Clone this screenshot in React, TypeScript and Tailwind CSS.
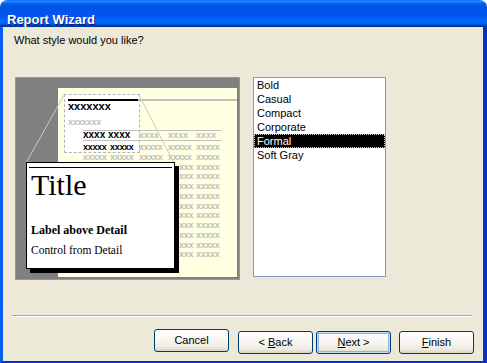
import React from 'react';

const styles = ['Bold', 'Casual', 'Compact', 'Corporate', 'Formal', 'Soft Gray'];
const selected = 'Formal';

// column lefts of the sample table, relative to its own left edge
const cols = [0, 27, 56, 85, 113];

const WizButton = ({ label, under, isDefault }: { label: string; under?: number; isDefault?: boolean }) => (
  <button
    className={`w-[75px] h-[23px] rounded-[3px] border border-[#003c74] bg-[linear-gradient(180deg,#ffffff_0%,#f5f4ef_55%,#ebe8de_85%,#d8d2c6_100%)] text-[11px] leading-[13px] text-black font-['Liberation_Sans',sans-serif] ${
      isDefault ? 'shadow-[inset_0_0_0_1px_#c6dcfb,inset_0_0_0_2px_#8fb2ea]' : ''
    }`}
  >
    {under === undefined ? (
      label
    ) : (
      <>
        {label.slice(0, under)}
        <span className="underline">{label[under]}</span>
        {label.slice(under + 1)}
      </>
    )}
  </button>
);

const Cell = ({ left, black, text = 'xxxxx' }: { left: number; black?: boolean; text?: string }) => (
  <div
    className={`absolute top-0 text-[9px] leading-[9px] tracking-[-0.3px] ${black ? 'text-black' : 'text-[#c0c0c0]'}`}
    style={{ left }}
  >
    {text}
  </div>
);

const Preview = () => (
  <div className="relative w-[225px] h-[203px] border border-[#7f9db9] bg-[#808080] overflow-hidden">
    {/* report page */}
    <div className="absolute left-[42px] top-[10px] w-[179px] h-[189px] bg-[#ffffe1]" />
    {/* zoomed area */}
    <div className="absolute left-[48px] top-[16px] w-[76px] h-[59px] bg-white border border-dashed border-[#b4b4b4]" />
    <div className="absolute left-[52px] top-[21px] w-[70px] h-[2px] bg-black" />
    <div className="absolute left-[122px] top-[21px] w-[99px] h-[2px] bg-[#c0c0c0]" />

    <div className="absolute left-[52px] top-[23px] text-[11px] leading-[11px] font-bold text-black font-['Liberation_Sans',sans-serif]">
      xxxxxxx
    </div>
    <div className="absolute left-[52px] top-[40px] text-[9px] leading-[9px] font-bold text-[#c0c0c0] font-['Liberation_Sans',sans-serif] tracking-[-0.3px]">
      xxxxxxx
    </div>

    {/* header row */}
    <div className="absolute left-[67px] top-[52px] w-[138px] h-[11px] border-y border-[#c0c0c0] font-['Liberation_Sans',sans-serif] font-bold">
      <div className="absolute left-0 top-[-1px] text-[10px] leading-[10px] text-black">xxxx xxxx</div>
      {cols.slice(2).map((c) => (
        <div key={c} className="absolute top-0 text-[9px] leading-[9px] text-[#c0c0c0]" style={{ left: c }}>
          xxxx
        </div>
      ))}
    </div>

    {/* data rows; the ones under the popup only show what sticks out */}
    <div className="absolute left-[67px] top-[65px] w-[138px] flex flex-col font-['Liberation_Sans',sans-serif] font-bold">
      {Array.from({ length: 12 }).map((_, r) => (
        <div key={r} className="relative h-[9.75px]">
          {r < 2 ? (
            cols.map((c, i) => <Cell key={c} left={c} black={r === 0 && i < 2} />)
          ) : (
            <>
              <Cell left={96} text="xxx" />
              <Cell left={cols[4]} />
            </>
          )}
        </div>
      ))}
    </div>

    {/* callout lines */}
    <svg className="absolute left-0 top-0" width="223" height="201">
      <line x1="48" y1="17" x2="10" y2="85" stroke="#c8c8c8" strokeWidth="1" />
      <line x1="123" y1="17" x2="158" y2="85" stroke="#c8c8c8" strokeWidth="1" />
    </svg>

    {/* zoomed popup */}
    <div className="absolute left-[10px] top-[84px] w-[149px] h-[107px] bg-white border border-black shadow-[4px_4px_0_0_#000] flex flex-col px-[2px] font-['Liberation_Serif',serif] text-black">
      <div className="mt-[4px] h-px bg-black" />
      <div className="mt-[2px] pl-[2px] text-[30px] leading-[30px]">Title</div>
      <div className="mt-[23px] pl-[2px] text-[12px] leading-[14px] font-bold">Label above Detail</div>
      <div className="mt-[6px] pl-[2px] text-[11.5px] leading-[14px]">Control from Detail</div>
    </div>
  </div>
);

export default function App() {
  return (
    <div className="w-[487px] h-[363px] flex flex-col font-['Liberation_Sans',sans-serif] text-black">
      <div className="h-[27px] shrink-0 rounded-t-[7px] bg-[linear-gradient(180deg,#0058ee_0%,#3593ff_4%,#288eff_6%,#127dff_8%,#036ffc_10%,#0262ee_14%,#0057e5_20%,#0054e3_24%,#0055eb_56%,#005bf5_66%,#026afe_76%,#0062ef_86%,#0052d6_92%,#0040ab_94%,#003092_100%)] pl-[7px] pt-[7px]">
        <span className="text-[13px] leading-[15px] font-bold text-white [text-shadow:1px_1px_#0a1883]">Report Wizard</span>
      </div>

      <div className="flex-1 flex flex-col bg-[#ece9d8] border-l-[3px] border-l-[#0b5cf0] border-r-[4px] border-r-[#0a2fc8] border-b-[2px] border-b-[#0a2fc8]">
        <div className="pt-[7px] pl-[11px] text-[11px] leading-[13px]">What style would you like?</div>

        <div className="mt-[30px] pl-[12px] flex items-start">
          <Preview />
          <div className="ml-[13px] w-[133px] h-[200px] border border-[#7f9db9] bg-white flex flex-col">
            {styles.map((s) => (
              <div
                key={s}
                className={`h-[14px] pl-[2px] text-[11px] leading-[12px] border ${
                  s === selected ? 'bg-black text-white border-dotted border-[#d0d0d0]' : 'border-transparent'
                }`}
              >
                {s}
              </div>
            ))}
          </div>
        </div>

        <div className="mt-[35px] ml-[9px] w-[460px] border-t border-t-[#aca899] border-b border-b-white" />

        <div className="mt-[12px] pr-[9px] flex justify-end">
          <WizButton label="Cancel" />
          <div className="ml-[9px]">
            <WizButton label="< Back" under={2} />
          </div>
          <div className="ml-[3px]">
            <WizButton label="Next >" under={0} isDefault />
          </div>
          <div className="ml-[8px]">
            <WizButton label="Finish" under={0} />
          </div>
        </div>
      </div>
    </div>
  );
}
